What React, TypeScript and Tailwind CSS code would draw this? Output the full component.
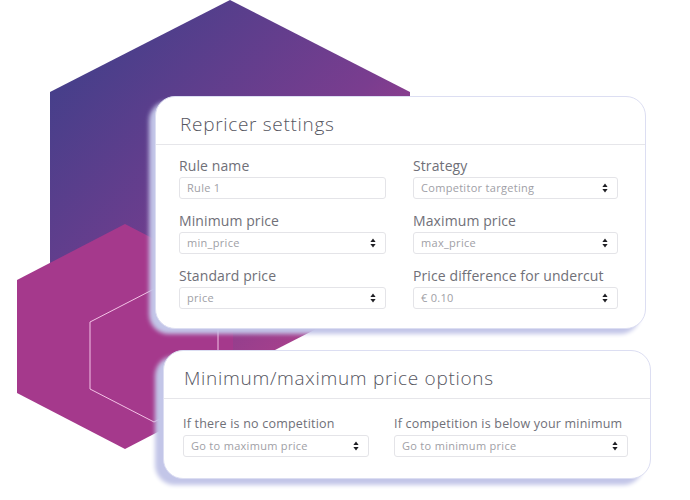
import { ReactNode } from "react";

const font = { fontFamily: '"Open Sans", "Liberation Sans", sans-serif' };

const Arrows = () => (
  <svg width="6" height="10" viewBox="0 0 6 10" className="shrink-0">
    <path d="M3 0.5 L5.6 4 H0.4 Z" fill="#1f1f24" />
    <path d="M3 9.5 L5.6 6 H0.4 Z" fill="#1f1f24" />
  </svg>
);

const Field = ({
  label,
  value,
  select = true,
  labelClass = "text-[14px] tracking-[0.1px]",
}: {
  label: string;
  value: string;
  select?: boolean;
  labelClass?: string;
}) => (
  <div className="flex flex-col">
    <span className={`${labelClass} leading-[18px] whitespace-nowrap text-[#707078]`}>{label}</span>
    <div className="mt-[2px] h-[22px] rounded-[3px] border border-[#e4e4e8] bg-white flex items-center justify-between pl-[7px] pr-[9px]">
      <span className="text-[11px] text-[#a0a0a6] tracking-[0.3px]">{value}</span>
      {select && <Arrows />}
    </div>
  </div>
);

const Card = ({ title, className, children }: { title: string; className: string; children: ReactNode }) => (
  <div className={`bg-white rounded-[20px] border border-[#dcdef2] ${className}`}>
    <div className="h-[48px] flex items-end pb-[10px] border-b border-[#e6e6ea]">
      <h2 className="text-[19px] font-light text-[#56565f] tracking-[0.7px] leading-none">{title}</h2>
    </div>
    {children}
  </div>
);

const Background = () => (
  <svg className="absolute inset-0" width="690" height="500" viewBox="0 0 690 500">
    <defs>
      <linearGradient id="g" x1="60" y1="60" x2="380" y2="360" gradientUnits="userSpaceOnUse">
        <stop offset="0" stopColor="#433f8a" />
        <stop offset="0.55" stopColor="#7a3d8f" />
        <stop offset="1" stopColor="#c0418a" />
      </linearGradient>
    </defs>
    <polygon points="230,0 410,92 410,281 230,373 50,281 50,92" fill="url(#g)" />
    <polygon points="125,224 233,280 233,393 125,449 17,393 17,280" fill="#a5398c" />
    <polygon points="154,289 218,322 218,389 154,422 90,389 90,322" fill="none" stroke="#f3c3e6" strokeWidth="1" />
  </svg>
);

export default function App() {
  return (
    <div className="relative w-[690px] h-[500px] bg-white overflow-hidden" style={font}>
      <Background />
      <div className="relative flex flex-col pt-[96px] pl-[155px]">
        {/* Repricer settings */}
        <Card
          title="Repricer settings"
          className="w-[491px] h-[233px] shadow-[-6px_5px_4px_#c3c6e8] [&>div:first-of-type]:pl-[24px]"
        >
          <div className="grid grid-cols-[207px_205px] gap-x-[27px] gap-y-[13px] pl-[23px] pt-[12px]">
            <Field label="Rule name" value="Rule 1" select={false} />
            <Field label="Strategy" value="Competitor targeting" />
            <Field label="Minimum price" value="min_price" />
            <Field label="Maximum price" value="max_price" />
            <Field label="Standard price" value="price" />
            <Field label="Price difference for undercut" value="€ 0.10" />
          </div>
        </Card>

        {/* Min / max options */}
        <Card
          title="Minimum/maximum price options"
          className="ml-[8px] mt-[21px] w-[488px] h-[129px] shadow-[-8px_6px_4px_#c3c6e8] [&>div:first-of-type]:pl-[20px]"
        >
          <div className="grid grid-cols-[186px_234px] gap-x-[25px] pl-[19px] pt-[16px]">
            <Field label="If there is no competition" value="Go to maximum price" labelClass="text-[12.5px] tracking-[0.2px]" />
            <Field label="If competition is below your minimum" value="Go to minimum price" labelClass="text-[12.5px] tracking-[0.2px]" />
          </div>
        </Card>
      </div>
    </div>
  );
}
